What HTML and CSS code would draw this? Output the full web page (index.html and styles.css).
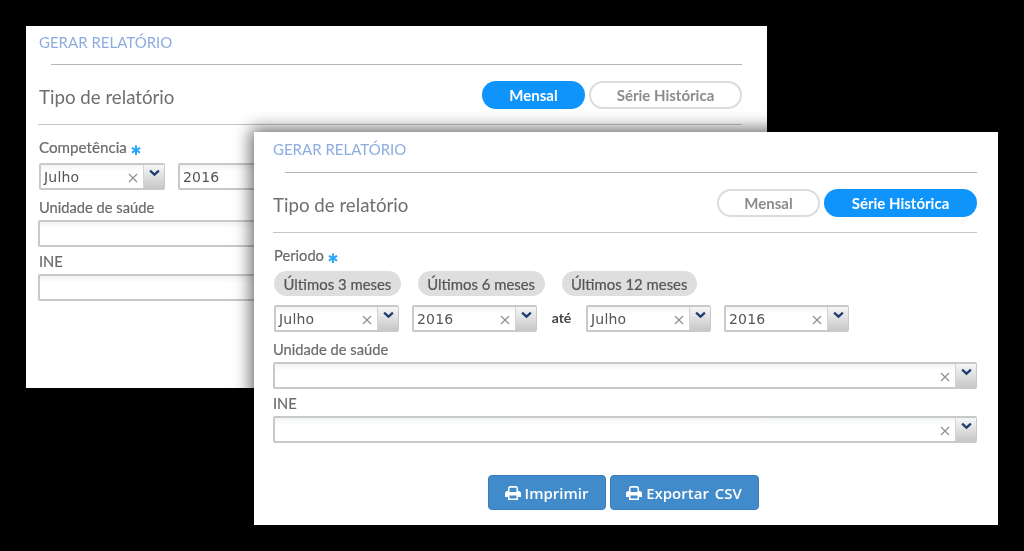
FILE: index.html
```html
<!DOCTYPE html>
<html lang="pt">
<head>
<meta charset="utf-8">
<title>Gerar relatório</title>
<link rel="stylesheet" href="styles.css">
</head>
<body>
<svg class="sprites" width="0" height="0" aria-hidden="true">
  <symbol id="chev" viewBox="0 0 12 8"><path d="M1.2 1.4 6 5.8l4.8-4.4" fill="none" stroke="#1f3a6e" stroke-width="2.4"/></symbol>
  <symbol id="times" viewBox="0 0 10 10"><path d="M1 1l8 8M9 1l-8 8" fill="none" stroke="#8f8f8f" stroke-width="1.2"/></symbol>
  <symbol id="printer" viewBox="0 0 16 14"><path fill="#fff" fill-rule="evenodd" d="M3 5V2.2C3 1 4 0 5.2 0h5.6C12 0 13 1 13 2.2V5h.6C15 5 16 6 16 7.4V11h-3v3H3v-3H0V7.4C0 6 1 5 2.4 5H3zm1.500-3.200V6h7V1.800h-7zM4.500 9.500V12.500h7V9.500h-7z"/></symbol>
</svg>

<section class="panel panel-back">
  <h2 class="title">GERAR RELATÓRIO</h2>
  <div class="type-row">
    <span class="type-label">Tipo de relatório</span>
    <div class="toggle">
      <span class="pill pill-on">Mensal</span>
      <span class="pill pill-off pill-wide">Série Histórica</span>
    </div>
  </div>
  <div class="label label-first">Competência <span class="req">✱</span></div>
  <div class="row">
    <div class="select"><span class="value">Julho</span><svg class="x"><use href="#times"/></svg><span class="arrow"><svg class="chev"><use href="#chev"/></svg></span></div>
    <div class="select"><span class="value">2016</span><svg class="x"><use href="#times"/></svg><span class="arrow"><svg class="chev"><use href="#chev"/></svg></span></div>
  </div>
  <div class="label">Unidade de saúde</div>
  <div class="select select-full"><span class="value"></span><svg class="x"><use href="#times"/></svg><span class="arrow"><svg class="chev"><use href="#chev"/></svg></span></div>
  <div class="label label-tight">INE</div>
  <div class="select select-full"><span class="value"></span><svg class="x"><use href="#times"/></svg><span class="arrow"><svg class="chev"><use href="#chev"/></svg></span></div>
</section>

<section class="panel panel-front">
  <h2 class="title">GERAR RELATÓRIO</h2>
  <div class="type-row">
    <span class="type-label">Tipo de relatório</span>
    <div class="toggle">
      <span class="pill pill-off">Mensal</span>
      <span class="pill pill-on pill-wide">Série Histórica</span>
    </div>
  </div>
  <div class="label label-first">Periodo <span class="req">✱</span></div>
  <div class="chips">
    <span class="chip">Últimos 3 meses</span>
    <span class="chip">Últimos 6 meses</span>
    <span class="chip">Últimos 12 meses</span>
  </div>
  <div class="row">
    <div class="select"><span class="value">Julho</span><svg class="x"><use href="#times"/></svg><span class="arrow"><svg class="chev"><use href="#chev"/></svg></span></div>
    <div class="select"><span class="value">2016</span><svg class="x"><use href="#times"/></svg><span class="arrow"><svg class="chev"><use href="#chev"/></svg></span></div>
    <span class="until">até</span>
    <div class="select"><span class="value">Julho</span><svg class="x"><use href="#times"/></svg><span class="arrow"><svg class="chev"><use href="#chev"/></svg></span></div>
    <div class="select"><span class="value">2016</span><svg class="x"><use href="#times"/></svg><span class="arrow"><svg class="chev"><use href="#chev"/></svg></span></div>
  </div>
  <div class="label">Unidade de saúde</div>
  <div class="select select-full"><span class="value"></span><svg class="x"><use href="#times"/></svg><span class="arrow"><svg class="chev"><use href="#chev"/></svg></span></div>
  <div class="label label-tight">INE</div>
  <div class="select select-full"><span class="value"></span><svg class="x"><use href="#times"/></svg><span class="arrow"><svg class="chev"><use href="#chev"/></svg></span></div>
  <div class="actions">
    <button class="btn btn-print" type="button"><svg class="printer"><use href="#printer"/></svg>Imprimir</button>
    <button class="btn btn-csv" type="button"><svg class="printer"><use href="#printer"/></svg>Exportar CSV</button>
  </div>
</section>
</body>
</html>
```

FILE: styles.css
```css
* { box-sizing: border-box; }
html, body { margin: 0; height: 100%; }
body {
  position: relative;
  width: 1024px;
  height: 551px;
  overflow: hidden;
  background: #000;
  font-family: Lato, "Open Sans", sans-serif;
  color: #666;
}
.sprites { position: absolute; }

.panel {
  position: absolute;
  background: #fff;
  display: flex;
  flex-direction: column;
  filter: blur(0.35px);
}
.panel-back { left: 26px; top: 26px; width: 741px; height: 362px; padding: 7px 25px 0 13px; }
.panel-front {
  left: 254px; top: 132px; width: 744px; height: 393px;
  padding: 8px 21px 0 19px;
  box-shadow: 0 0 16px 3px rgba(0, 0, 0, .6);
}

.title {
  margin: 0;
  height: 32px;
  flex: none;
  padding-top: 1px;
  font-size: 15px;
  line-height: 17px;
  font-weight: 400;
  color: #8cace0;
  position: relative;
}
.panel-front .title { height: 33px; }
.title::after {
  content: "";
  position: absolute;
  left: 12px; right: 0; bottom: 0;
  height: 1px;
  background: #b5b5b5;
}
.type-row {
  height: 60px;
  flex: none;
  padding-top: 1px;
  display: flex;
  align-items: center;
  justify-content: space-between;
  border-bottom: 1px solid #c4c4c4;
}
.panel-back .type-row { margin-left: -1px; padding-left: 1px; }
.type-label { font-size: 18.7px; color: #6e6e6e; padding-top: 3px; }
.toggle { display: flex; gap: 4px; }
.pill {
  width: 103px;
  height: 28px;
  border-radius: 14px;
  display: flex;
  align-items: center;
  justify-content: center;
  font-size: 15px;
  font-weight: 700;
}
.pill-wide { width: 153px; }
.pill-on { background: #0e94fb; color: #fff; }
.pill-off { background: #fff; border: 2px solid #dcdcdc; color: #8c8c8c; }

.label {
  flex: none;
  font-size: 14.7px;
  line-height: 16px;
  height: 18px;
  margin: 9px 0 3px;
  color: #6b6b6b;
  -webkit-text-stroke: .2px #6b6b6b;
}
.label-tight { margin-top: 6px; }
.label-first { margin: 14px 0 6px 1px; }
.panel-back .label-first { margin-left: 0; font-size: 15.2px; }
.req {
  color: #2aa8f5;
  font: 700 13px/16px "DejaVu Sans", sans-serif;
  vertical-align: -2px;
  -webkit-text-stroke: 0;
}

.row { display: flex; gap: 13px; padding-left: 1px; align-items: center; flex: none; }
.panel-back .row { padding-left: 0; }
.select {
  width: 125px;
  height: 27px;
  flex: none;
  display: flex;
  align-items: stretch;
  border: 2px solid #c9c9c9;
  border-radius: 2px;
  background: linear-gradient(#f1f4f5, #fff 30%);
}
.panel-back .select { width: 126px; }
.select.select-full { width: 100%; }
.panel-back .select-full { margin-left: -1px; }
.value {
  flex: 1;
  padding-left: 3px;
  font: 14px/25px "DejaVu Sans", sans-serif;
  letter-spacing: .2px;
  color: #555;
}
.x { width: 10px; height: 10px; align-self: center; margin: 3px 5px 0 0; }
.arrow {
  width: 21px;
  flex: none;
  margin-right: -1px;
  border-left: 1px solid #d5d5d5;
  display: flex;
  justify-content: center;
  padding-top: 4px;
  background: linear-gradient(#f5f6f7, #c8c8c8);
}
.chev { width: 11px; height: 8px; }

.chips { display: flex; gap: 17px; padding-left: 1px; height: 25px; margin-bottom: 9px; flex: none; }
.chip {
  height: 25px;
  padding: 0 9.5px;
  border-radius: 13px;
  background: #dedede;
  color: #555;
  font-size: 14.9px;
  line-height: 26px;
  -webkit-text-stroke: .2px #555;
}
.until { font-size: 14px; font-weight: 700; color: #444; width: 23px; text-align: center; margin-top: -2px; white-space: nowrap; }

.actions { display: flex; justify-content: center; gap: 4px; margin-top: 32px; padding-right: 4px; flex: none; }
.btn {
  height: 35px;
  border: 1px solid #3a7cbc;
  border-radius: 4px;
  background: #428bca;
  color: #fff;
  font: 600 15px "Open Sans", sans-serif;
  word-spacing: 2px;
  display: flex;
  align-items: center;
  justify-content: center;
  gap: 4px;
  padding: 0;
}
.btn-print { width: 118px; }
.btn-csv { width: 149px; }
.printer { width: 16px; height: 14px; }
```
